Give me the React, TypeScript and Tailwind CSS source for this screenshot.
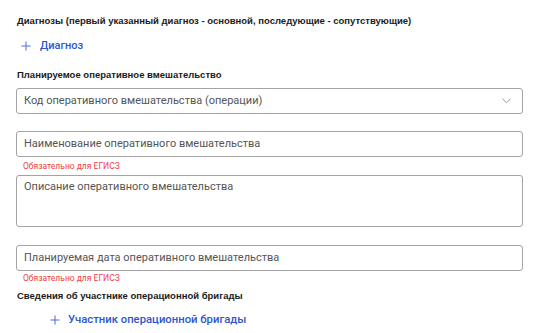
import React from "react";

const Plus = ({ className }: { className?: string }) => (
  <svg viewBox="0 0 12 12" className={className} fill="none" stroke="currentColor" strokeWidth="1.2">
    <path d="M6 0.5V11.5M0.5 6H11.5" />
  </svg>
);

const Label = ({ children, className = "" }: { children: React.ReactNode; className?: string }) => (
  <div className={`text-[9.5px] leading-[12px] font-bold text-[#1b1b1b] ${className}`} style={{ fontFamily: '"Liberation Sans", Arial, sans-serif' }}>
    {children}
  </div>
);

const Req = ({ className = "" }: { className?: string }) => (
  <div className={`pl-[7px] text-[8.5px] leading-[10px] text-[#f0443f] ${className}`}>Обязательно для ЕГИСЗ</div>
);

export default function App() {
  return (
    <div className="w-[539px] h-[333px] bg-white overflow-hidden" style={{ fontFamily: "Roboto, sans-serif" }}>
      <div className="flex flex-col pl-[16px] pr-[16px] pt-[15px]">
        <Label className="pl-[1px]">Диагнозы (первый указанный диагноз - основной, последующие - сопутствующие)</Label>
        <div className="mt-[11px] flex items-center h-[16px] pl-[5px]">
          <Plus className="w-[10px] h-[10px] text-[#4b6fd6]" />
          <span className="ml-[9px] text-[11px] font-medium text-[#2d57cc]">Диагноз</span>
        </div>
        <Label className="mt-[15px] pl-[1px]">Планируемое оперативное вмешательство</Label>
        <div className="mt-[7px] h-[26px] w-[507px] border border-[#a3a3a3] rounded-[3px] flex items-center justify-between pl-[7px] pr-[11px] text-[11px] leading-[16px]">
          <span className="text-[#555]">Код оперативного вмешательства (операции)</span>
          <svg viewBox="0 0 10 6" className="w-[9px] h-[6px]" fill="none" stroke="#8a8a8a" strokeWidth="1">
            <path d="M0.5 0.5L5 5L9.5 0.5" />
          </svg>
        </div>
        <div className="mt-[17px] h-[26px] w-[507px] border border-[#a3a3a3] rounded-[3px] flex items-center pl-[7px] text-[11px] leading-[16px]">
          <span className="text-[#555]">Наименование оперативного вмешательства</span>
        </div>
        <Req className="mt-[4px]" />
        <div className="mt-[4px] h-[52px] w-[507px] border border-[#a3a3a3] rounded-[3px] pl-[7px] pt-[3px] text-[11px] leading-[16px]">
          <span className="text-[#555]">Описание оперативного вмешательства</span>
        </div>
        <div className="mt-[18px] h-[26px] w-[507px] border border-[#a3a3a3] rounded-[3px] flex items-center pl-[7px] text-[11px] leading-[16px]">
          <span className="text-[#555]">Планируемая дата оперативного вмешательства</span>
        </div>
        <Req className="mt-[2px]" />
        <Label className="mt-[7px] pl-[1px]">Сведения об участнике операционной бригады</Label>
        <div className="mt-[10px] flex items-center h-[16px] pl-[34px]">
          <Plus className="w-[10px] h-[10px] text-[#4b6fd6]" />
          <span className="ml-[8px] text-[11.3px] font-medium text-[#2d57cc]">Участник операционной бригады</span>
        </div>
      </div>
    </div>
  );
}
